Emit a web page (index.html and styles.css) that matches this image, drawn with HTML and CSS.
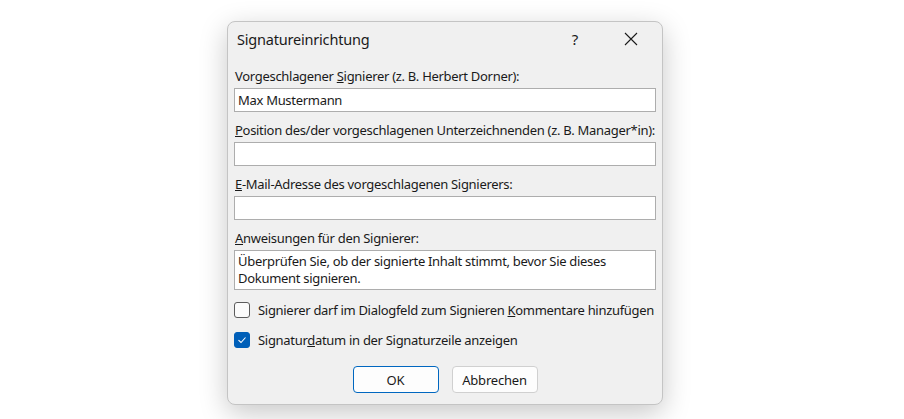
FILE: index.html
```html
<!DOCTYPE html>
<html lang="de">
<head>
    <meta charset="UTF-8">
    <title>Signatureinrichtung</title>
    <link rel="stylesheet" href="styles.css">
</head>
<body>
    <div class="dialog">
        <div class="titlebar">
            <span class="title">Signatureinrichtung</span>
            <span class="help">?</span>
            <span class="close">
                <svg width="14" height="14" viewBox="0 0 14 14"><path d="M1 1L13 13M13 1L1 13" stroke="#1a1a1a" stroke-width="1.1" fill="none"/></svg>
            </span>
        </div>
        <div class="content">
            <div class="field">
                <label>Vorgeschlagener <u>S</u>ignierer (z. B. Herbert Dorner):</label>
                <div class="input">Max Mustermann</div>
            </div>
            <div class="field">
                <label><u>P</u>osition des/der vorgeschlagenen Unterzeichnenden (z. B. Manager*in):</label>
                <div class="input"></div>
            </div>
            <div class="field">
                <label><u>E</u>-Mail-Adresse des vorgeschlagenen Signierers:</label>
                <div class="input"></div>
            </div>
            <div class="field">
                <label><u>A</u>nweisungen für den Signierer:</label>
                <div class="input textarea">Überprüfen Sie, ob der signierte Inhalt stimmt, bevor Sie dieses<br>Dokument signieren.</div>
            </div>
            <div class="check">
                <span class="box"></span>
                <span>Signierer darf im Dialogfeld zum Signieren <u>K</u>ommentare hinzufügen</span>
            </div>
            <div class="check">
                <span class="box checked">
                    <svg width="10" height="10" viewBox="0 0 10 10"><path d="M1.5 5.2L4 7.5L8.5 2.5" stroke="#fff" stroke-width="1.1" fill="none"/></svg>
                </span>
                <span>Signatur<u>d</u>atum in der Signaturzeile anzeigen</span>
            </div>
            <div class="buttons">
                <button class="primary">OK</button>
                <button>Abbrechen</button>
            </div>
        </div>
    </div>
</body>
</html>
```

FILE: styles.css
```css
body {
    margin: 0;
    background: #fff;
    font-family: 'Segoe UI', 'Noto Sans', sans-serif;
    color: #1a1a1a;
    height: 419px;
    overflow: hidden;
}
.dialog {
    margin: 21px 0 0 227px;
    width: 434px;
    height: 382px;
    background: #f0f0f0;
    border: 1px solid #c4c4c4;
    border-radius: 8px;
    box-shadow: 0 8px 28px rgba(0, 0, 0, 0.22);
}
.titlebar {
    height: 34px;
    padding-bottom: 5px;
    display: flex;
    align-items: center;
    padding-left: 9px;
}
.title {
    font-size: 14.5px;
    letter-spacing: -0.2px;
    flex: 1;
}
.help {
    font-size: 15px;
    width: 30px;
    text-align: center;
    margin-right: 26px;
}
.close {
    width: 30px;
    height: 34px;
    display: flex;
    align-items: center;
    justify-content: center;
    margin-right: 16px;
}
.content {
    padding: 7px 6px 0 6px;
    font-size: 13px;
    letter-spacing: -0.3px;
    white-space: nowrap;
}
.field {
    margin-bottom: 10px;
}
.field label {
    display: block;
    line-height: 17px;
    margin-bottom: 3px;
    padding-left: 1px;
}
.input {
    height: 22px;
    background: #fff;
    border: 1px solid #adadad;
    line-height: 22px;
    padding: 0 3px;
}
.input.textarea {
    height: 34px;
    line-height: 17px;
    padding: 2px 3px;
}
.check {
    display: flex;
    align-items: center;
    height: 20px;
    margin-bottom: 10px;
}
.box {
    width: 14px;
    height: 14px;
    border: 1px solid #5c5c5c;
    border-radius: 3px;
    background: #fbfbfb;
    margin-right: 8px;
    display: flex;
    align-items: center;
    justify-content: center;
}
.box.checked {
    background: #005fb8;
    border-color: #005fb8;
}
.buttons {
    display: flex;
    justify-content: center;
    gap: 13px;
    margin-top: 16px;
}
.buttons button {
    width: 86px;
    height: 27px;
    background: #fdfdfd;
    border: 1px solid #d0d0d0;
    border-radius: 4px;
    font-family: inherit;
    font-size: 13px;
    letter-spacing: -0.2px;
    color: #1a1a1a;
}
.buttons .primary {
    border-color: #0067c0;
}
```
